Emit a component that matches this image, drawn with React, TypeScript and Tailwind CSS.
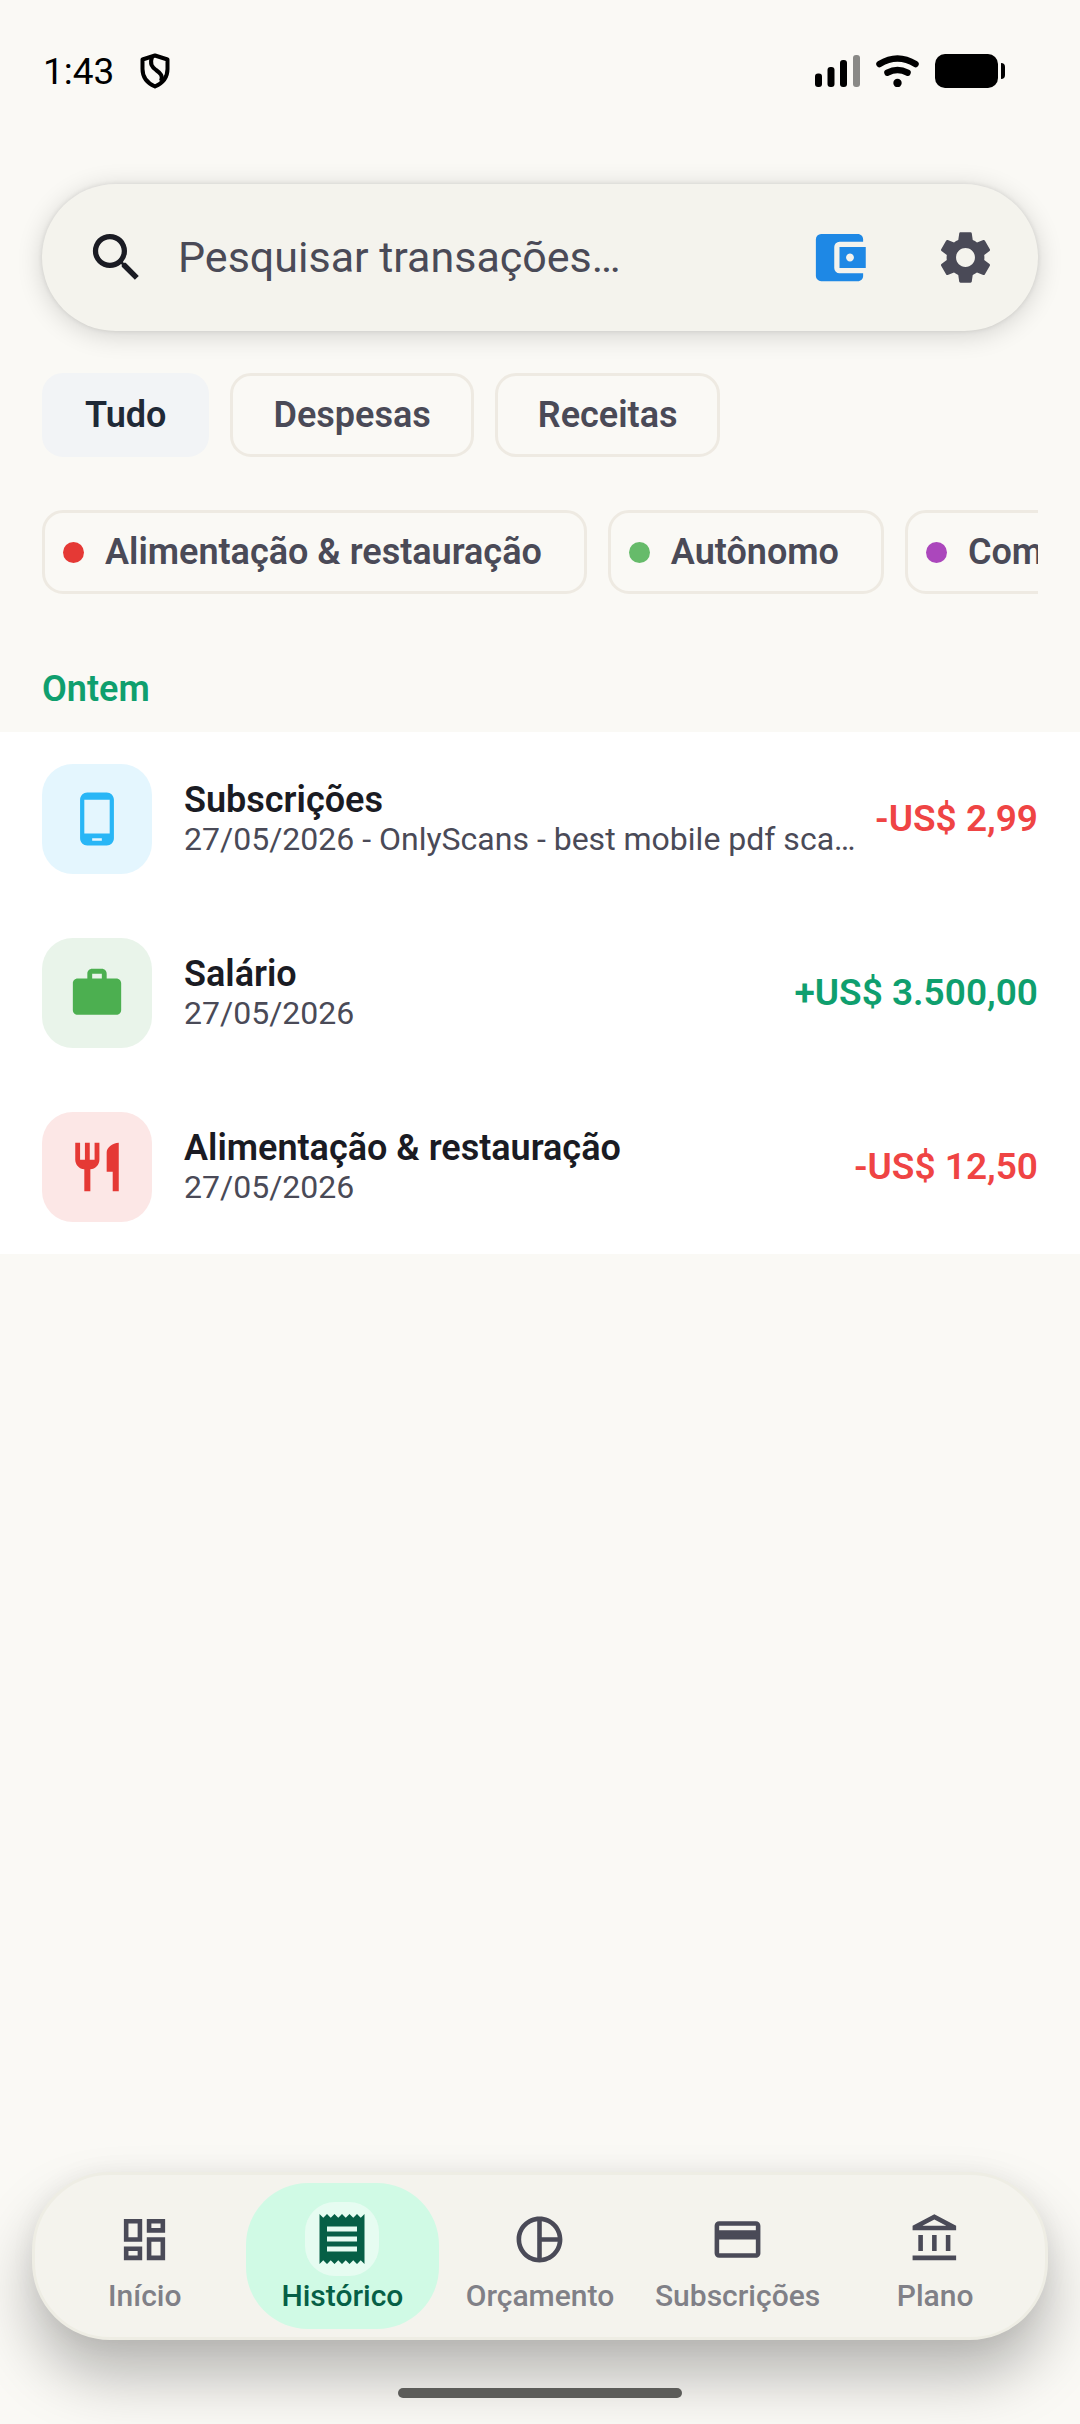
import React, { useState } from 'react';
import {
  MdAccountBalanceWallet,
  MdOutlineAccountBalance,
  MdOutlineCreditCard,
  MdOutlineDashboard,
  MdOutlinePieChart,
  MdPhoneAndroid,
  MdReceipt,
  MdRestaurant,
  MdSearch,
  MdSettings,
  MdWork,
} from 'react-icons/md';

interface Transaction {
  id: number;
  title: string;
  detail: string;
  amount: string;
  amountClass: string;
  icon: any;
  iconClass: string;
}

const filters = ['Tudo', 'Despesas', 'Receitas'];

const categories = [
  { name: 'Alimentação & restauração', dot: 'bg-[#e53935]' },
  { name: 'Autônomo', dot: 'bg-[#66bb6a]' },
  { name: 'Compras', dot: 'bg-[#ab47bc]' },
];

const transactions: Transaction[] = [
  {
    id: 1,
    title: 'Subscrições',
    detail: '27/05/2026 - OnlyScans - best mobile pdf scanner',
    amount: '-US$ 2,99',
    amountClass: 'text-[#ef4444]',
    icon: MdPhoneAndroid,
    iconClass: 'bg-[#e4f6fe] text-[#29b6f6]',
  },
  {
    id: 2,
    title: 'Salário',
    detail: '27/05/2026',
    amount: '+US$ 3.500,00',
    amountClass: 'text-[#0f9f6e]',
    icon: MdWork,
    iconClass: 'bg-[#e9f4ea] text-[#4caf50]',
  },
  {
    id: 3,
    title: 'Alimentação & restauração',
    detail: '27/05/2026',
    amount: '-US$ 12,50',
    amountClass: 'text-[#ef4444]',
    icon: MdRestaurant,
    iconClass: 'bg-[#fce7e6] text-[#e53935]',
  },
];

const tabs = [
  { name: 'Início', icon: MdOutlineDashboard },
  { name: 'Histórico', icon: MdReceipt },
  { name: 'Orçamento', icon: MdOutlinePieChart },
  { name: 'Subscrições', icon: MdOutlineCreditCard },
  { name: 'Plano', icon: MdOutlineAccountBalance },
];

function StatusBar() {
  return (
    <div className="flex h-[142px] items-center justify-between pl-[43px] pr-[75px] text-black">
      <div className="flex items-center gap-[26px]">
        <span className="text-[37px] leading-none">1:43</span>
        <svg width="30" height="36" viewBox="0 0 30 36" fill="none" stroke="currentColor" strokeWidth="4">
          <path d="M15 2.500 27.500 6.500V16C27.500 24 23 30 15 33.500 7 30 2.500 24 2.500 16V6.500Z" strokeLinejoin="round" />
          <path d="M12 4C9.500 11 12 14 16 17 21 20.500 23 23 21 28" />
        </svg>
      </div>
      <div className="flex items-center gap-4">
        <svg width="45" height="32" viewBox="0 0 45 32" fill="currentColor">
          <rect x="0" y="18.500" width="7" height="13.500" rx="3" />
          <rect x="12.500" y="12" width="7" height="20" rx="3" />
          <rect x="25" y="5" width="7" height="27" rx="3" />
          <rect x="38" y="0" width="7" height="32" rx="3" opacity="0.450" />
        </svg>
        <svg width="43" height="32" viewBox="0 0 43 32" fill="none" stroke="currentColor" strokeLinecap="round">
          <path d="M3.500 9Q21.500 -2 39.500 9" strokeWidth="6.500" />
          <path d="M11.500 17.700Q21.500 12.500 31.500 17.700" strokeWidth="6.500" />
          <circle cx="21.500" cy="28" r="4.200" fill="currentColor" stroke="none" />
        </svg>
        <svg width="70" height="34" viewBox="0 0 70 34" fill="currentColor">
          <rect width="63" height="34" rx="10" />
          <path d="M66 9Q70 9 70 13V21Q70 25 66 25Z" />
        </svg>
      </div>
    </div>
  );
}

export default function App() {
  const [query, setQuery] = useState('');
  const [filter, setFilter] = useState('Tudo');
  const [tab, setTab] = useState('Histórico');

  return (
    <div className="flex min-h-screen flex-col overflow-x-clip bg-[#faf9f5] font-['Roboto',sans-serif] text-[#4a4a57]">
      <StatusBar />

      {/* Search */}
      <div className="mx-[42px] mt-[42px] flex h-[147px] items-center rounded-[74px] bg-[#f4f3ed] px-[10px] shadow-[0_4px_26px_rgba(0,0,0,0.16),0_0_5px_rgba(0,0,0,0.1)]">
        <label htmlFor="search" className="flex w-[126px] shrink-0 justify-center pl-[2px] text-[#1a1b23]">
          <MdSearch size={63} />
        </label>
        <input
          id="search"
          type="text"
          aria-label="Pesquisar transações"
          placeholder="Pesquisar transações…"
          value={query}
          onChange={(e) => setQuery(e.target.value)}
          className="min-w-0 flex-1 bg-transparent text-[43px] outline-none placeholder:text-[#4a4a57]"
        />
        <button type="button" aria-label="Carteira" className="flex w-[126px] shrink-0 justify-center text-[#1e88e5]">
          <MdAccountBalanceWallet size={63} />
        </button>
        <button type="button" aria-label="Definições" className="flex w-[126px] shrink-0 justify-center">
          <MdSettings size={63} />
        </button>
      </div>

      {/* Type filters */}
      <div className="mx-[42px] mt-[42px] flex gap-[21px]">
        {filters.map((name) => (
          <button
            key={name}
            type="button"
            onClick={() => setFilter(name)}
            className={`h-[84px] rounded-[21px] border-[3px] px-10 text-[36px] font-semibold ${
              filter === name
                ? 'border-[#f2f4f6] bg-[#f2f4f6] text-[#1f2937]'
                : 'border-[#eeeae2]'
            }`}
          >
            {name}
          </button>
        ))}
      </div>

      {/* Categories */}
      <div className="mx-[42px] mt-[53px] flex gap-[21px] overflow-hidden">
        {categories.map((category) => (
          <button
            key={category.name}
            type="button"
            className="flex h-[84px] shrink-0 items-center gap-[21px] rounded-[21px] border-[3px] border-[#eeeae2] pl-[18px] pr-[42px] text-[36px] font-semibold"
          >
            <span className={`size-[21px] rounded-full ${category.dot}`} />
            {category.name}
          </button>
        ))}
      </div>

      <h2 className="px-[42px] pb-[22px] pt-[74px] text-[36px] font-semibold leading-[42px] text-[#0f9f6e]">
        Ontem
      </h2>
      <ul className="bg-white">
        {transactions.map((item) => (
          <li key={item.id} className="flex h-[174px] items-center px-[42px]">
            <div
              className={`flex size-[110px] shrink-0 items-center justify-center rounded-[31px] ${item.iconClass}`}
            >
              <item.icon size={58} />
            </div>
            <div className="ml-8 min-w-0 flex-1">
              <h3 className="text-[36px] font-semibold leading-10 text-[#1a1b23]">{item.title}</h3>
              <p className="truncate text-[32px] leading-[38px]">{item.detail}</p>
            </div>
            <span className={`ml-4 shrink-0 text-[37px] font-semibold ${item.amountClass}`}>{item.amount}</span>
          </li>
        ))}
      </ul>

      {/* Bottom navigation */}
      <nav className="sticky bottom-[84px] mx-8 mb-12 mt-auto flex h-[168px] items-center rounded-[78px] border-[3px] border-[#eeede4] bg-[#f4f3ed] px-[11px] shadow-[0_36px_60px_rgba(0,0,0,0.27),0_0_24px_rgba(0,0,0,0.05)]">
        {tabs.map(({ name, icon: Icon }) => {
          const active = tab === name;
          return (
            <button
              key={name}
              type="button"
              onClick={() => setTab(name)}
              className={`mx-[2px] flex h-[146px] min-w-0 flex-1 flex-col items-center rounded-[62px] pt-[19px] ${
                active ? 'bg-[#d0fae5] text-[#065f46]' : ''
              }`}
            >
              <span
                className={`flex size-[74px] items-center justify-center rounded-[30px] ${
                  active ? 'bg-[#e6fcf1]' : ''
                }`}
              >
                <Icon size={active ? 60 : 55} />
              </span>
              <span className={`mt-[2px] text-[30px] font-medium leading-9 ${active ? '' : 'text-[#808087]'}`}>
                {name}
              </span>
            </button>
          );
        })}
      </nav>
      <div className="relative mx-auto mb-[26px] h-[10px] w-[284px] rounded-[5px] bg-[#5c5c59]" />
    </div>
  );
}
